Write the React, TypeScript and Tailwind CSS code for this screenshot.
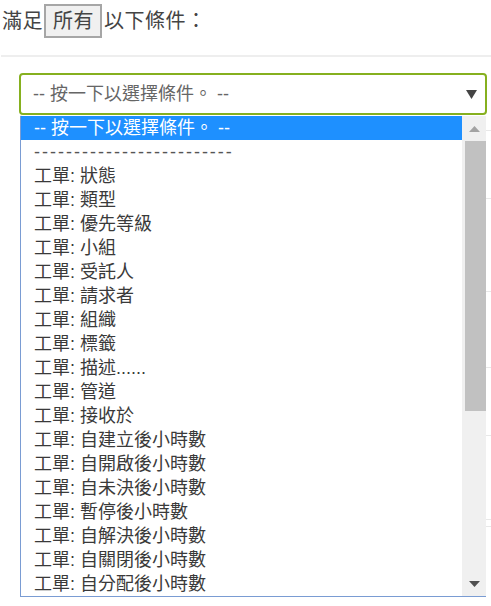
import React from "react";

const FONT = '"Liberation Sans", "Noto Sans CJK TC", sans-serif';

const options = [
  "工單: 狀態",
  "工單: 類型",
  "工單: 優先等級",
  "工單: 小組",
  "工單: 受託人",
  "工單: 請求者",
  "工單: 組織",
  "工單: 標籤",
  "工單: 描述......",
  "工單: 管道",
  "工單: 接收於",
  "工單: 自建立後小時數",
  "工單: 自開啟後小時數",
  "工單: 自未決後小時數",
  "工單: 暫停後小時數",
  "工單: 自解決後小時數",
  "工單: 自關閉後小時數",
  "工單: 自分配後小時數",
];

// faint rows of the form that sits behind the open list
const bgRows = [16, 68, 93, 76, 68, 84, 7];

const App: React.FC = () => {
  return (
    <div
      className="relative w-[491px] h-[606px] bg-white overflow-hidden"
      style={{ fontFamily: FONT }}
    >
      {/* Heading */}
      <div className="flex items-center h-[40px] pt-[2px] pl-[2px] text-[20px] text-[#444] tracking-[0.5px]">
        <span>滿足</span>
        <span className="ml-[1px] mr-[2px] h-[34px] pl-[7px] pr-[6px] flex items-center bg-[#f0f0f0] border-2 border-[#a6a6a6]">
          所有
        </span>
        <span>以下條件：</span>
      </div>

      <div className="mt-[15px] ml-[1px] h-[2px] bg-[#eeeeee]" />

      {/* Closed select */}
      <div className="mt-[16px] ml-[19px] w-[468px] h-[42px] border-2 border-[#86b01f] rounded-[4px] flex items-center justify-between pl-[12px] pr-[8px] text-[18px] text-[#666]">
        <span>-- 按一下以選擇條件。 --</span>
        <svg width="11" height="9" viewBox="0 0 11 9" className="mt-[1px]">
          <path d="M0 0h11L5.5 9z" fill="#444" />
        </svg>
      </div>

      {/* Background rows under the list */}
      <div className="ml-[20px] border-l-2 border-[#f0f0f0]">
        {bgRows.map((h, i) => (
          <div
            key={i}
            className="border-b border-[#e8e8e8]"
            style={{ height: h }}
          />
        ))}
      </div>

      {/* Open option list */}
      <div className="absolute left-[20px] top-[116px] w-[466px] h-[481px] bg-white border-l border-b border-[#7a9cd3] flex text-[18px] text-[#3a3a3a] leading-[24px]">
        <div className="flex-1 flex flex-col">
          <div className="h-[24px] pl-[13px] bg-[#1e90ff] text-white">
            -- 按一下以選擇條件。 --
          </div>
          <div className="h-[24px] pl-[13px] text-[#555] tracking-[2px]">
            -------------------------
          </div>
          {options.map((o) => (
            <div key={o} className="h-[24px] pl-[13px] whitespace-nowrap">
              {o}
            </div>
          ))}
        </div>

        {/* Scrollbar */}
        <div className="w-[24px] bg-[#f0f0f0] flex flex-col items-center">
          <div className="h-[25px] flex items-center justify-center">
            <svg width="11" height="6" viewBox="0 0 11 6">
              <path d="M5.5 0L11 6H0z" fill="#a3a3a3" />
            </svg>
          </div>
          <div className="ml-[2px] w-[21px] h-[270px] bg-[#c1c1c1]" />
          <div className="flex-1" />
          <div className="h-[25px] flex items-center justify-center">
            <svg width="11" height="6" viewBox="0 0 11 6">
              <path d="M0 0h11L5.5 6z" fill="#505050" />
            </svg>
          </div>
        </div>
      </div>
    </div>
  );
};

export default App;
